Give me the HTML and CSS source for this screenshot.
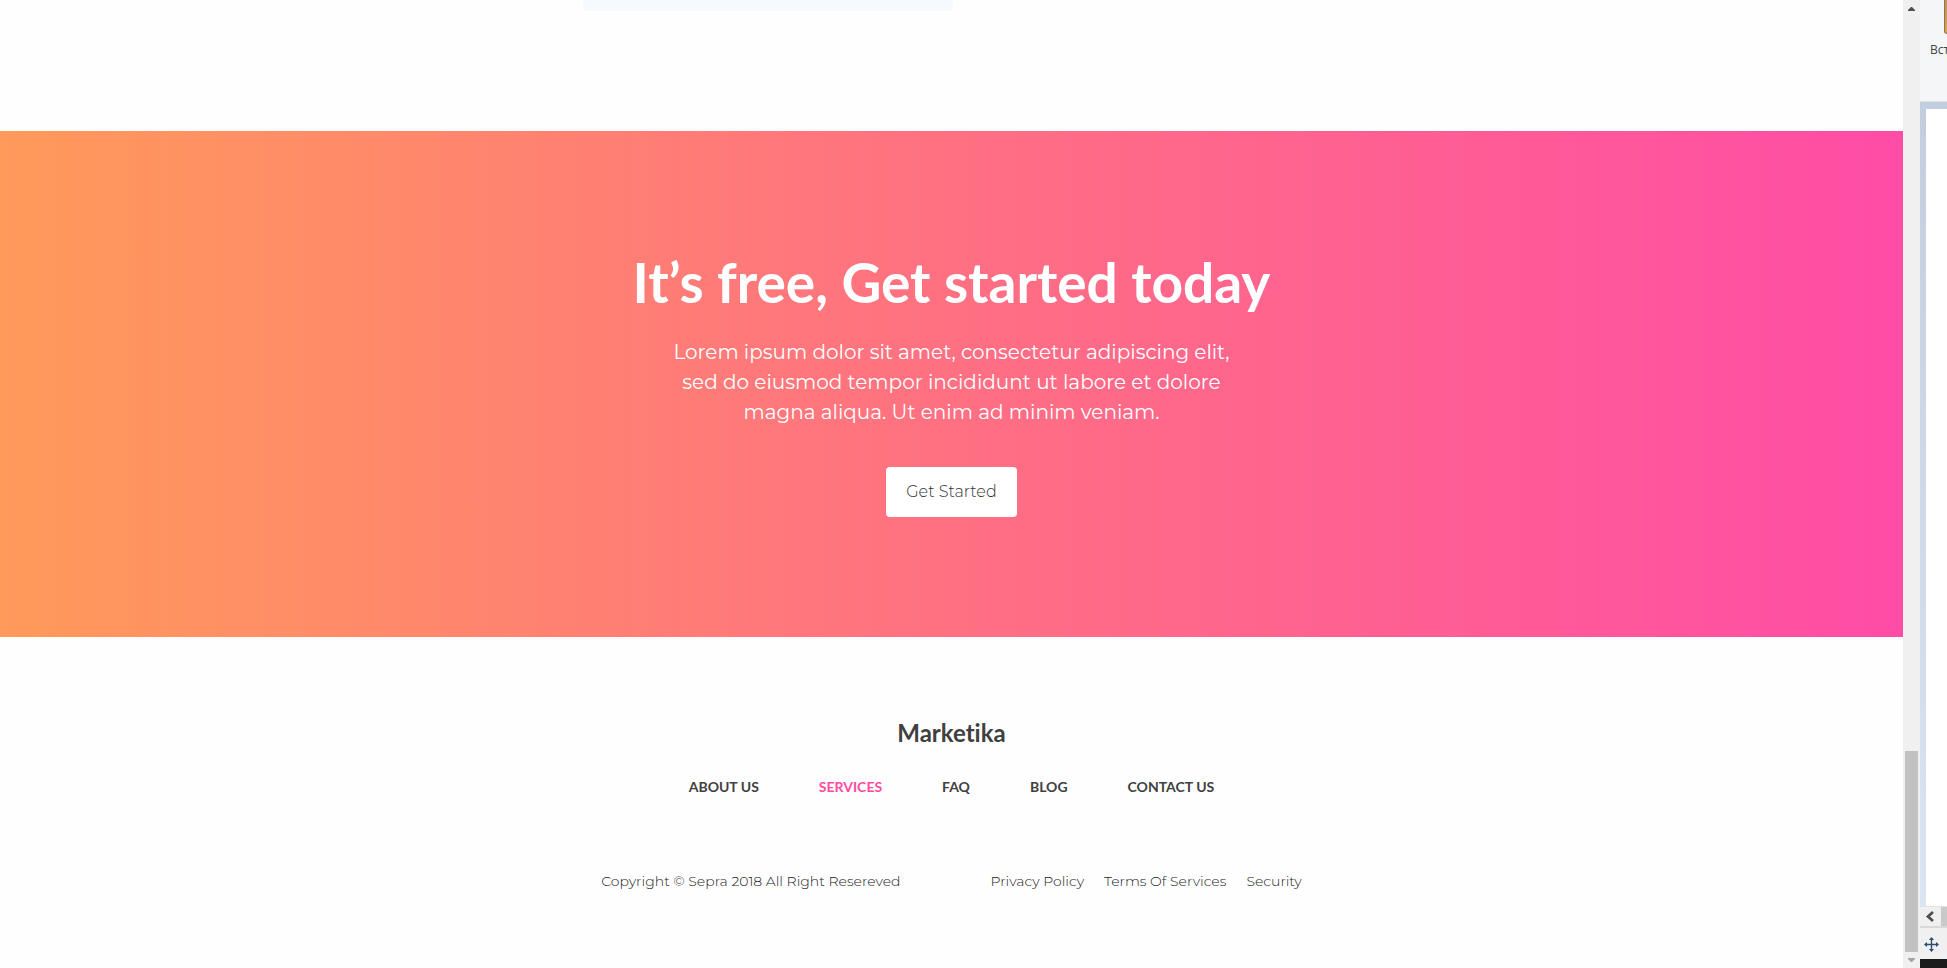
FILE: index.html
```html
<!DOCTYPE html>
<html lang="en">
<head>
<meta charset="utf-8">
<title>Marketika</title>
<link rel="stylesheet" href="styles.css">
</head>
<body>
<div class="desktop">
  <div class="page">
    <div class="previous"><div class="tile"></div></div>
    <main class="cta">
      <h1 class="cta-title">It’s free, Get started today</h1>
      <p class="cta-text">Lorem ipsum dolor sit amet, consectetur adipiscing elit,<br>sed do eiusmod tempor incididunt ut labore et dolore<br>magna aliqua. Ut enim ad minim veniam.</p>
      <button class="cta-button" type="button">Get Started</button>
    </main>
    <footer class="footer">
      <h2 class="brand">Marketika</h2>
      <nav class="nav">
        <a href="#about">ABOUT US</a>
        <a class="active" href="#services">SERVICES</a>
        <a href="#faq">FAQ</a>
        <a href="#blog">BLOG</a>
        <a href="#contact">CONTACT US</a>
      </nav>
      <div class="legal">
        <span>Copyright © Sepra 2018 All Right Resereved</span>
        <div class="legal-links">
          <a href="#privacy">Privacy Policy</a>
          <a href="#terms">Terms Of Services</a>
          <a href="#security">Security</a>
        </div>
      </div>
    </footer>
  </div>
  <div class="scrollbar">
    <svg class="arrow" width="17" height="17" viewBox="0 0 17 17"><path d="M5 11h7V10L9 7H8L5 10z" fill="#505050"/></svg>
    <div class="thumb"></div>
    <svg class="arrow" width="17" height="16" viewBox="0 0 17 16"><path d="M5 6h7v1L9 10H8L5 7z" fill="#a3a3a3"/></svg>
  </div>
  <aside class="editor">
    <div class="ribbon">
      <div class="clipboard"></div>
      <span class="ribbon-label">Вст</span>
    </div>
    <div class="canvas"><div class="sheet"></div></div>
    <div class="hscroll">
      <svg width="21" height="19" viewBox="0 0 21 19"><path d="M13 5L8 9.500l5 4.500" fill="none" stroke="#505050" stroke-width="2.800"/></svg>
      <div class="hthumb"></div>
    </div>
    <div class="status">
      <svg width="15" height="15" viewBox="0 0 15 15"><path d="M7.500 1v13M1 7.500h13" stroke="#2d4f75" stroke-width="1.400"/><path d="M7.500 0L10 3H5zM7.500 15L5 12h5zM0 7.500L3 5v5zM15 7.500L12 10V5z" fill="#2d4f75"/></svg>
    </div>
    <div class="taskbar"></div>
  </aside>
</div>
</body>
</html>
```
FILE: styles.css
```css
* { box-sizing: border-box; }
body {
  margin: 0;
  background: #fff;
  color: #404040;
  font-family: Montserrat, Inter, "Liberation Sans", sans-serif;
  font-variant-ligatures: none;
}
a { color: inherit; text-decoration: none; }
.desktop {
  display: flex;
  height: 100vh;
  overflow: hidden;
}
.page {
  flex: 1;
  min-width: 0;
  background: #fefefe;
}
.previous {
  display: flex;
  justify-content: center;
  padding-bottom: 120px;
}
.tile {
  width: 370px;
  height: 11px;
  margin-right: 368px;
  background: #f5fafe;
}
.cta {
  display: flex;
  flex-direction: column;
  align-items: center;
  padding: 120px 20px;
  background: linear-gradient(90deg, #ff9a5a, #ff7082 50%, #ff4ca6);
  color: #fff;
  text-align: center;
}
.cta-title {
  margin: 0 0 24px;
  font-family: Lato, sans-serif;
  font-size: 55px;
  font-weight: 700;
  line-height: 62px;
}
.cta-text {
  margin: 0 0 40px;
  font-size: 20px;
  line-height: 30px;
}
.cta-button {
  padding: 0 20px;
  border: 0;
  border-radius: 4px;
  background: #fff;
  color: #333;
  font-family: inherit;
  font-size: 16px;
  font-weight: 300;
  line-height: 50px;
}
.footer {
  display: flex;
  flex-direction: column;
  align-items: center;
  padding: 80px 20px;
}
.brand {
  margin: 0 0 30px;
  font-family: Lato, sans-serif;
  font-size: 24px;
  font-weight: 700;
  line-height: 32px;
}
.nav {
  display: flex;
  gap: 60px;
  margin-bottom: 74px;
  font-family: Lato, sans-serif;
  font-size: 14px;
  font-weight: 700;
  line-height: 16px;
}
.active { color: #ff4ba0; }
.legal {
  display: flex;
  gap: 90px;
  color: #222;
  font-size: 14px;
  font-weight: 300;
  line-height: 24px;
}
.legal-links {
  display: flex;
  gap: 20px;
}
.scrollbar {
  display: flex;
  flex-direction: column;
  width: 17px;
  background: #f0f0f0;
}
.arrow { flex: none; }
.thumb {
  height: 201px;
  margin: auto 2px 0;
  background: #c1c1c1;
}
.editor {
  display: flex;
  flex-direction: column;
  width: 27px;
  overflow: hidden;
}
.ribbon {
  height: 102px;
  padding-left: 10px;
  background: #f4f6f8;
  border-bottom: 1px solid #dde2e7;
  color: #444;
  font-family: "Open Sans", sans-serif;
  font-size: 12px;
  line-height: 18px;
}
.clipboard {
  width: 30px;
  height: 34px;
  margin: 0 0 7px 14px;
  border: 1px solid #997344;
  border-top: 0;
  border-radius: 0 0 0 3px;
  background: linear-gradient(#b99562, #d0a45c);
}
.ribbon-label { display: block; }
.canvas {
  flex: 1;
  display: flex;
  padding: 7px 0 0 6px;
  background: linear-gradient(#c3cde0, #d9e5f2);
}
.sheet {
  flex: 1;
  background: #fff;
}
.hscroll {
  display: flex;
  height: 20px;
  border-top: 1px solid #e2e2e2;
  background: #f0f0f0;
}
.hthumb {
  flex: 1;
  background: #c9c9c9;
}
.status {
  height: 33px;
  padding: 9px 4px;
  border-top: 2px solid #d8d8d8;
  background: #f0f0f0;
}
.taskbar {
  height: 9px;
  background: #1c1c1c;
}
```
